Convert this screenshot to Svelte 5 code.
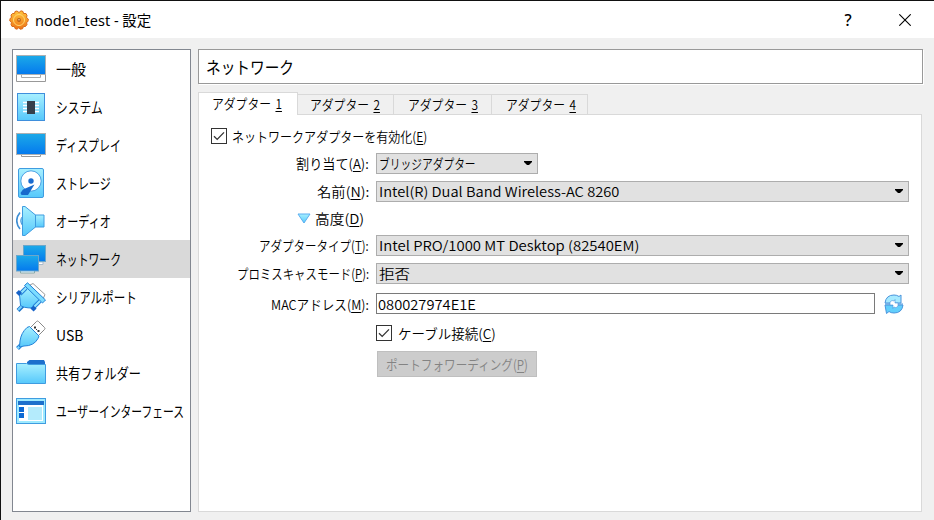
<script>
  // Condense or widen a label so that it fills its column exactly.
  function fit(node, width) {
    node.style.transform = `scaleX(${width / node.offsetWidth})`;
  }

  const pages = [
    { icon: 'general', label: '一般', w: 30 },
    { icon: 'system', label: 'システム', w: 47 },
    { icon: 'display', label: 'ディスプレイ', w: 65 },
    { icon: 'storage', label: 'ストレージ', w: 55 },
    { icon: 'audio', label: 'オーディオ', w: 55 },
    { icon: 'network', label: 'ネットワーク', w: 65 },
    { icon: 'serial', label: 'シリアルポート', w: 81 },
    { icon: 'usb', label: 'USB', w: 27 },
    { icon: 'folder', label: '共有フォルダー', w: 85 },
    { icon: 'ui', label: 'ユーザーインターフェース', w: 128 }
  ];
  const selected = 'network';
  const tabs = [
    { n: '1', w: 100 },
    { n: '2', w: 96 },
    { n: '3', w: 98 },
    { n: '4', w: 96 }
  ];
</script>

{#snippet text(pre, key, post, w)}
  <span class="fit" style:width="{w}px"><span class="ink" use:fit={w}>{pre}{#if key}<u>{key}</u>{/if}{post}</span></span>
{/snippet}

{#snippet check()}
  <span class="check"><svg width="14" height="14" viewBox="0 0 14 14"><path d="M2 7.2 5.2 10.4 12 3.4" fill="none" stroke="#333" stroke-width="1.3" /></svg></span>
{/snippet}

{#snippet combo(label, w, small)}
  <div class="combo" class:small>
    {@render text(label, '', '', w)}
    <svg width="8" height="4" viewBox="0 0 8 4"><path d="M0 0H8V1L5 4H3L0 1Z" /></svg>
  </div>
{/snippet}

{#snippet icon(name)}
  <svg class="icon" width="30" height="30" viewBox="0 0 30 30">
    {#if name === 'general'}
      <path d="M.5 20.500H29.500V27.500H.5Z" fill="#fff" stroke="#999" />
      <path d="M5.500 21V23.500H24.500V21" fill="#fff" stroke="#aaa" />
      <rect x=".5" y="1.500" width="29" height="19" fill="url(#screen)" stroke="#aab0b4" />
    {:else if name === 'system'}
      <rect x="1.500" y="1.500" width="27" height="27" fill="url(#pale)" stroke="#3f8fdc" />
      <path d="M7 10.500H23M7 13.500H23M7 16.500H23M7 19.500H23" stroke="#fff" stroke-width="1.500" />
      <rect x="11" y="9" width="8" height="13" fill="#35404c" />
    {:else if name === 'display'}
      <path d="M5.500 24V26.500H24.500V24" fill="#fff" stroke="#999" />
      <rect x=".5" y="3.500" width="29" height="21" fill="url(#screen)" stroke="#aab0b4" />
    {:else if name === 'storage'}
      <rect x="2.500" y=".5" width="25" height="29" rx="1.500" fill="url(#pale)" stroke="#3f9ce0" />
      <circle cx="15" cy="13" r="10.200" fill="#fff" stroke="#4aa0e4" />
      <circle cx="15" cy="13" r="2.700" fill="#1a6bd0" />
      <path d="M18.500 16.500 12 27H5.500L4.500 25 7 21.500Z" fill="#1769cc" />
    {:else if name === 'audio'}
      <path d="M4 6.500Q-2.500 14.500 4 23" fill="none" stroke="#3f8fd4" stroke-width="1.600" />
      <path d="M6.500 10.500Q3 14.500 6.500 19.500Z" fill="#8adcff" stroke="#3f8fd4" />
      <path d="M18 9H28V21H18Z" fill="url(#pale)" stroke="#3f9ce0" />
      <path d="M6.500 .5H9L19.500 9V21L9 29.500H6.500Z" fill="url(#pale)" stroke="#3f9ce0" />
    {:else if name === 'network'}
      <path d="M11 18H27V20.500H11Z" fill="#fff" stroke="#abc" />
      <rect x="7.500" y="1.500" width="22" height="16" fill="url(#screen)" stroke="#6ba7cb" />
      <path d="M4.500 27V29H18.500V27" fill="#eaf6ff" stroke="#8aa" />
      <rect x=".5" y="11.500" width="22" height="15.500" fill="url(#screen)" stroke="#6ba7cb" />
    {:else if name === 'serial'}
      <path d="M14 3 17 1.500 29 12.500 27 17Z" fill="#fff" stroke="#999" />
      <path d="M2 28.500 7 23.500" stroke="#1c72c8" stroke-width="4" />
      <path d="M2 28 7 23" stroke="#79d3ff" stroke-width="2" />
      <path d="M11 5 3.500 12.500 4.500 23Q6 26 17 26L26 18Z" fill="url(#pale)" stroke="#2382d8" />
      <path d="M8.500 3.500 11.500 .8 29.500 18 26.500 21Z" fill="#7cdcff" stroke="#2382d8" />
      <path d="M10 6 4 12M24 19 18 25" stroke="#2382d8" stroke-width="4" />
      <path d="M10 6 4 12M24 19 18 25" stroke="#92e4ff" stroke-width="2" />
      <path d="M4.500 9.500 1.500 12.500M19 25 16 28" stroke="#1763c8" stroke-width="4.500" />
    {:else if name === 'usb'}
      <path d="M14.500 7.500 20.500 1.500Q21.500 .5 22.500 1.500L28.500 7.500Q29.500 8.500 28.500 9.500L22 16Z" fill="#fff" stroke="#888" />
      <path d="M18 6.500h2v2h-2ZM21.500 10h2v2h-2ZM20 9h1v1h-1Z" fill="#333" />
      <path d="M1.500 28.500 5 25" stroke="#2382d8" stroke-width="4" />
      <path d="M1.500 28.500 5 25" stroke="#85d9ff" stroke-width="2" />
      <path d="M11 7.500 13.500 6.500 23 16 22 18.500Q18 26 8 26L3.500 27 4 21Q5 13 11 7.500Z" fill="url(#pale)" stroke="#2382d8" />
    {:else if name === 'folder'}
      <path d="M11 7V4L13.500 2H28L29 4V7Z" fill="#1d70cc" />
      <path d="M.5 5.500H10.500L13 6.500H29.500V25.500H.5Z" fill="url(#pale)" stroke="#3f9ce0" />
    {:else}
      <rect x=".5" y="2.500" width="29" height="25" fill="#fff" stroke="#3f9ce0" />
      <path d="M2 4H28V26H2Z" fill="#fff" stroke="#9eeaff" stroke-width="2" />
      <rect x="2" y="5" width="26" height="4" fill="#1d70cc" />
      <path d="M3 11H8V16H3ZM3 17H8V22H3Z" fill="#0b69d4" />
      <rect x="12" y="11" width="14" height="13" fill="#b4ebfc" />
    {/if}
  </svg>
{/snippet}

<svg class="defs" width="0" height="0">
  <defs>
    <linearGradient id="screen" x2="0" y2="1"><stop stop-color="#1caae8" /><stop offset="1" stop-color="#0479ee" /></linearGradient>
    <linearGradient id="pale" x2="0" y2="1"><stop stop-color="#a8f0ff" /><stop offset="1" stop-color="#56c8fb" /></linearGradient>
    <linearGradient id="gold" x2="0" y2="1"><stop stop-color="#ffc53d" /><stop offset="1" stop-color="#ee7416" /></linearGradient>
  </defs>
</svg>

<div class="window">
  <header>
    <svg class="gear" width="20" height="20" viewBox="0 0 20 20">
      <path d="M8 1 10 2.500 12 .8 14 1.500 14.500 3.500 17 3.500 18 5.500 17.500 7.500 19.300 9 19 11.500 17.500 12.500 18 14.500 16.500 16.500 14.500 16.500 13.500 18.800 11 19.200 10 17.500 8 19.200 6 18.500 5.500 16.500 3 16.500 2 14.500 2.500 12.500 .8 11 1 8.500 2.500 7.500 2 5 3.500 3.500 5.500 3.500 6 1.500Z" fill="url(#gold)" stroke="#d86a18" />
      <circle cx="10" cy="10" r="5.500" fill="none" stroke="#ffd873" />
      <circle cx="10" cy="10" r="1.900" fill="#b75f1b" /><circle cx="10" cy="9.700" r=".7" fill="#ffe6a0" />
    </svg>
    <h1>{@render text('node1_test - 設定', '', '', 116)}</h1>
    <span class="help">?</span>
    <svg class="close" width="12" height="12" viewBox="0 0 12 12"><path d="M.3 .3 11.700 11.700M11.700 .3 .3 11.700" stroke="#000" stroke-width="1.100" /></svg>
  </header>
  <div class="body">
    <nav>
      {#each pages as p}
        <div class="page" class:on={p.icon === selected}>
          {@render icon(p.icon)}
          {@render text(p.label, '', '', p.w)}
        </div>
      {/each}
    </nav>
    <main>
      <h2>{@render text('ネットワーク', '', '', 88)}</h2>
      <div class="tabs">
        {#each tabs as t, i}
          <div class="tab" class:active={i === 0} style:width="{t.w}px">{@render text('アダプター ', t.n, '', 70)}</div>
        {/each}
      </div>
      <section>
        <div class="row lead">{@render check()}{@render text('ネットワークアダプターを有効化(', 'E', ')', 195)}</div>
        <div class="row up"><div class="label">{@render text('割り当て(', 'A', '):', 73)}</div>{@render combo('ブリッジアダプター', 97, true)}</div>
        <div class="row up"><div class="label">{@render text('名前(', 'N', '):', 52)}</div>{@render combo('Intel(R) Dual Band Wireless-AC 8260', 240)}</div>
        <div class="row up"><div class="label adv"><svg width="14" height="11" viewBox="0 0 14 11"><path d="M1 1H13L7 10Z" fill="url(#pale)" stroke="#5aaef0" /></svg>{@render text('高度(', 'D', ')', 49)}</div></div>
        <div class="row up"><div class="label">{@render text('アダプタータイプ(', 'T', '):', 110)}</div>{@render combo('Intel PRO/1000 MT Desktop (82540EM)', 260)}</div>
        <div class="row up"><div class="label">{@render text('プロミスキャスモード(', 'P', '):', 132)}</div>{@render combo('拒否', 31)}</div>
        <div class="row"><div class="label">{@render text('MACアドレス(', 'M', '):', 98)}</div>
          <div class="input">{@render text('080027974E1E', '', '', 98)}</div>
          <svg class="refresh" width="20" height="20" viewBox="0 0 20 20">
            <path d="M1 9Q2 1 10 1Q13 1 15 2.500L17 1V9Z" fill="#a6eaff" stroke="#4a94dc" />
            <path d="M19 11Q18 19 10 19Q7 19 5 17.500L2.500 19.500 1 11Z" fill="#62cffc" stroke="#4a94dc" />
            <path d="M1 10H19" stroke="#4a94dc" />
            <path d="M6 11V8Q8 5.500 10 7L11 5.500V9H14V12Q12 15 10 13L9 14.500V11Z" fill="#fff" stroke="#4a94dc" stroke-width=".6" />
          </svg>
        </div>
        <div class="row field">{@render check()}{@render text('ケーブル接続(', 'C', ')', 98)}</div>
        <div class="row field"><div class="button">{@render text('ポートフォワーディング(', 'P', ')', 142)}</div></div>
      </section>
    </main>
  </div>
</div>

<style>
  :global(body) { margin: 0; }
  .defs { position: absolute; }
  .window { width: 934px; height: 520px; box-sizing: border-box; overflow: hidden; background: #f0f0f0; border-top: 1px solid #111; border-left: 1px solid #111; color: #000; font: 14px/20px "Noto Sans CJK JP", "Noto Sans", sans-serif; }
  header { display: flex; align-items: center; height: 37px; background: #fff; }
  .gear { margin-left: 8px; }
  h1, h2 { margin: 0; font-weight: 400; }
  h1 { margin-left: 6px; font-size: 15px; line-height: 20px; font-family: "Noto Sans", "Noto Sans CJK JP", sans-serif; }
  .help { margin-left: auto; width: 10px; text-align: center; font: 500 16px/20px "Noto Sans", sans-serif; }
  .close { margin: 0 23px 0 46px; }
  .fit { display: inline-block; flex: none; white-space: pre; text-align: left; }
  .ink { display: inline-block; transform-origin: 0 50%; }
  .up .fit { padding-bottom: 2px; }
  u { text-decoration: underline; text-decoration-thickness: 1px; text-underline-offset: 2px; }
  .body { display: flex; gap: 7px; padding: 11px 11px 8px; height: 463px; }
  nav { width: 177px; border: 1px solid #828790; background: #fff; }
  .page { display: flex; align-items: center; gap: 10px; height: 38px; padding-left: 3px; font-size: 15px; }
  .page.on { background: #d9d9d9; }
  .icon { flex: none; }
  main { display: flex; flex-direction: column; width: 725px; }
  h2 { display: flex; align-items: center; box-sizing: border-box; height: 35px; padding-left: 7px; border: 1px solid #999; background: #fff; box-shadow: 1px 1px #fff; font-size: 17px; }
  .tabs { display: flex; align-items: flex-end; height: 23px; margin: 8px 0 -1px; z-index: 1; font-size: 13.500px; font-weight: 350; word-spacing: 2px; }
  .tab { box-sizing: border-box; height: 21px; padding-left: 12px; border: 1px solid #d9d9d9; border-left: 0; line-height: 19px; }
  .tab:nth-child(n + 3) { padding-left: 14px; }
  .tab.active { height: 23px; padding-left: 13px; border-left: 1px solid #d9d9d9; border-bottom: 0; background: #fff; line-height: 21px; }
  section { display: grid; grid-template-rows: 28px 27px 29px 25px 29px 27px 33px 26px 36px; box-sizing: border-box; width: 724px; flex: 1; padding-top: 7px; border: 1px solid #d9d9d9; background: #fff; font-size: 13.500px; font-weight: 350; }
  .row { display: flex; align-items: center; }
  .lead { padding-left: 12px; gap: 5px; }
  .label { width: 170px; margin-right: 7px; text-align: right; }
  .adv { display: flex; justify-content: flex-end; align-items: center; gap: 4px; padding-right: 5px; box-sizing: border-box; }
  .field { padding-left: 177px; gap: 6px; }
  .check { display: flex; box-sizing: border-box; width: 16px; height: 16px; border: 1px solid #333; background: #fff; }
  .combo { display: flex; align-items: center; justify-content: space-between; box-sizing: border-box; width: 533px; height: 21px; padding: 0 5px 0 2px; border: 1px solid #adadad; background: #e1e1e1; }
  .combo svg { margin-bottom: 1px; }
  .combo.small { width: 162px; }
  .input { display: flex; align-items: center; box-sizing: border-box; width: 499px; height: 21px; padding-left: 1px; border: 1px solid #7a7a7a; background: #fff; }
  .refresh { margin-left: 9px; }
  .button { display: flex; align-items: center; justify-content: center; box-sizing: border-box; width: 160px; height: 26px; margin-left: 1px; border: 1px solid #bfbfbf; background: #ccc; color: #838383; }
</style>
